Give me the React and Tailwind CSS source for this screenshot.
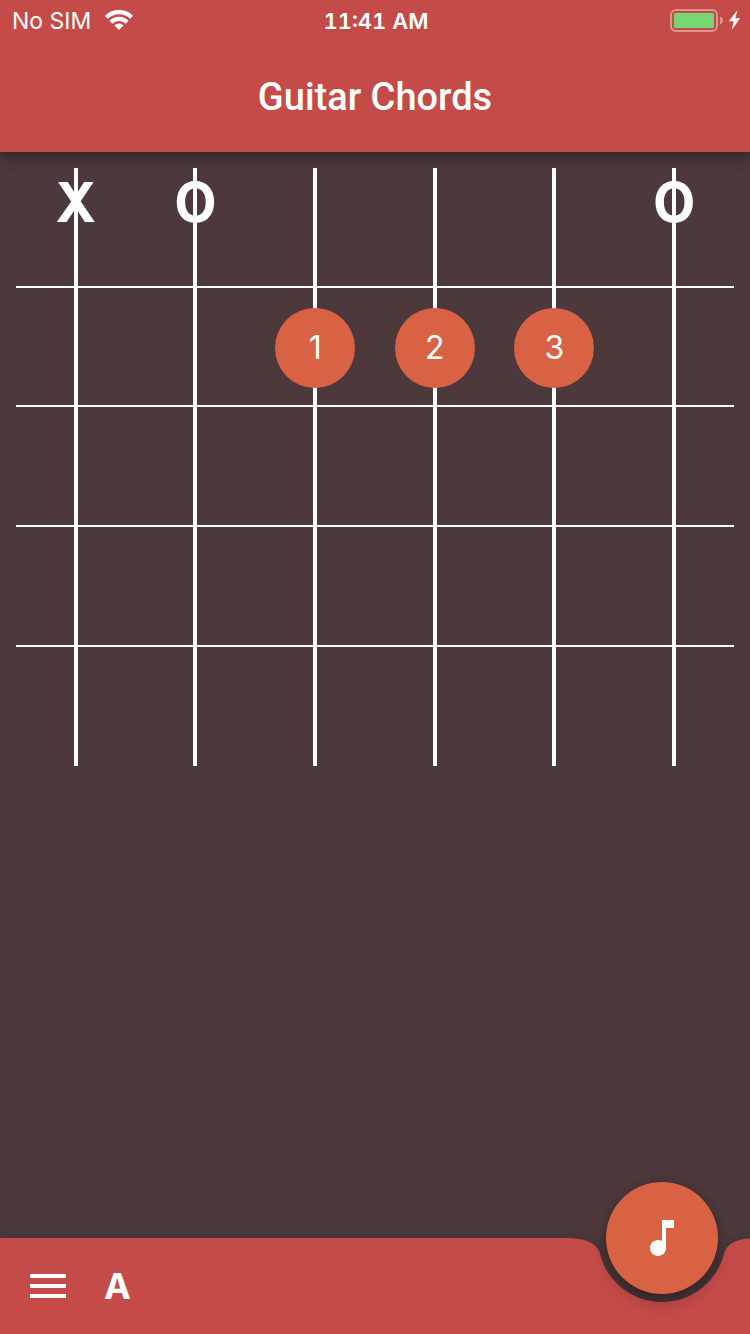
const FRETS = [0, 1, 2, 3, 4];

const STRINGS = [
  { id: 6, open: "X" },
  { id: 5, open: "O" },
  { id: 4, finger: 1, fret: 1 },
  { id: 3, finger: 2, fret: 1 },
  { id: 2, finger: 3, fret: 1 },
  { id: 1, open: "O" },
];

function WifiIcon() {
  return (
    <svg viewBox="0 0 28 22" className="h-[22px] w-7" aria-hidden="true">
      <g fill="none" stroke="#fff" strokeWidth="4.2">
        <path d="M1.4 7.3a17.8 17.8 0 0 1 25.2 0" />
        <path d="M5.9 12.2a11.500 11.500 0 0 1 16.200 0" />
      </g>
      <path fill="#fff" d="M14 20l-4.600-4.500a6.500 6.500 0 0 1 9.200 0z" />
    </svg>
  );
}

function BatteryIcon() {
  return (
    <svg viewBox="0 0 70 26" className="h-[26px] w-[70px]" aria-hidden="true">
      <rect x="1" y="2" width="46" height="21" rx="5" fill="none" stroke="#fff" strokeOpacity="0.4" strokeWidth="2" />
      <rect x="4" y="5" width="40" height="15" rx="1.5" fill="#76d672" />
      <path d="M50 8.5c1.800.6 3 2.100 3 4s-1.200 3.400-3 4z" fill="#fff" fillOpacity="0.4" />
      <path d="M67.500 2L58.700 13.300h4.900L61.800 22 70 10.200h-4.700z" fill="#fff" />
    </svg>
  );
}

function StatusBar() {
  return (
    <div className="grid h-[42px] grid-cols-[1fr_auto_1fr] items-center pl-3 pr-2.5 text-[23px] leading-none">
      <div className="flex items-center gap-3.5">
        <span>No SIM</span>
        <WifiIcon />
      </div>
      <time className="text-[22px] font-semibold tabular-nums">11:41 AM</time>
      <div className="flex justify-end">
        <BatteryIcon />
      </div>
    </div>
  );
}

function FretCell({ string, fret }) {
  return (
    <div className="relative flex aspect-square items-center justify-center">
      <span className="absolute inset-y-0 left-1/2 w-1 -translate-x-1/2 bg-white" />
      {fret < 4 && <span className="absolute inset-x-0 bottom-0 h-[2px] bg-white" />}
      {fret === 0 && string.open && (
        <span className="relative self-start text-[55px] font-bold leading-[69px]">{string.open}</span>
      )}
      {string.fret === fret && (
        <span className="relative flex size-20 items-center justify-center rounded-full bg-[#d96245] text-[32px]">
          {string.finger}
        </span>
      )}
    </div>
  );
}

function BottomBar() {
  return (
    <footer className="relative flex h-24 drop-shadow-[0_-1px_6px_rgba(0,0,0,0.14)]">
      <nav className="flex flex-1 items-center gap-8 bg-[#c54b49] pl-6">
        <button type="button" aria-label="Menu" className="size-12">
          <svg viewBox="0 0 24 24" className="size-12" fill="#fff" aria-hidden="true">
            <path d="M3 18h18v-2H3v2zm0-5h18v-2H3v2zm0-7v2h18V6H3z" />
          </svg>
        </button>
        <button type="button" className="text-[36px] font-bold leading-none">A</button>
      </nav>
      <svg viewBox="0 0 184 96" className="h-24 w-[184px]" fill="#c54b49" aria-hidden="true">
        <path d="M0 0Q30 0 33.940 15.640A64 64 0 0 0 158.060 15.640Q162 0 192 0V96H0Z" />
      </svg>
      <button
        type="button"
        aria-label="Play chord"
        className="absolute -top-14 right-8 flex size-28 items-center justify-center rounded-full bg-[#d96245] shadow-[0_6px_10px_-2px_rgba(0,0,0,0.2),0_12px_20px_rgba(0,0,0,0.12),0_2px_24px_rgba(0,0,0,0.06)]"
      >
        <svg viewBox="0 0 24 24" className="size-12" fill="#fff" aria-hidden="true">
          <path d="M12 3v10.550c-.59-.34-1.270-.55-2-.55-2.210 0-4 1.790-4 4s1.790 4 4 4 4-1.790 4-4V7h4V3h-6z" />
        </svg>
      </button>
    </footer>
  );
}

export default function App() {
  return (
    <div className="flex min-h-screen flex-col overflow-hidden bg-[#4d393b] font-['Inter','Liberation_Sans',sans-serif] text-white">
      <header className="relative bg-[#c54b49] shadow-[0_4px_8px_-2px_rgba(0,0,0,0.2),0_8px_10px_rgba(0,0,0,0.14),0_2px_20px_rgba(0,0,0,0.12)]">
        <StatusBar />
        <h1 className="text-center font-['Roboto','Liberation_Sans',sans-serif] text-[38px] font-medium leading-[110px]">
          Guitar Chords
        </h1>
      </header>
      <main className="flex-1 p-4">
        <div className="grid grid-cols-6">
          {FRETS.map((fret) =>
            STRINGS.map((string) => <FretCell key={`${fret}-${string.id}`} string={string} fret={fret} />)
          )}
        </div>
      </main>
      <BottomBar />
    </div>
  );
}
